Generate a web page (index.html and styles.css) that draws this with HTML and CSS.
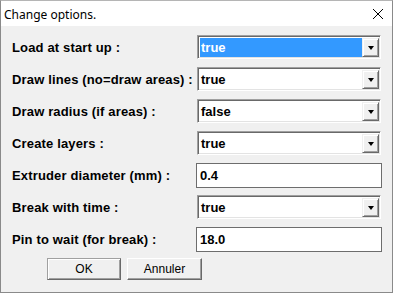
FILE: index.html
```html
<!DOCTYPE html>
<html lang="en">
<head>
    <meta charset="UTF-8">
    <meta name="viewport" content="width=device-width, initial-scale=1.0">
    <title>Change options.</title>
    <link rel="stylesheet" href="styles.css">
</head>
<body>
    <div class="window">
        <div class="titlebar">
            <span class="title">Change options.</span>
            <svg class="close" width="12" height="12" viewBox="0 0 12 12">
                <path d="M1 1 L11 11 M11 1 L1 11" stroke="#000" stroke-width="1"/>
            </svg>
        </div>
        <div class="content">
            <div class="row">
                <span class="label">Load at start up :</span>
                <div class="combo">
                    <span class="value selected">true</span>
                    <span class="drop"><span class="arrow"></span></span>
                </div>
            </div>
            <div class="row">
                <span class="label">Draw lines (no=draw areas) :</span>
                <div class="combo">
                    <span class="value">true</span>
                    <span class="drop"><span class="arrow"></span></span>
                </div>
            </div>
            <div class="row">
                <span class="label">Draw radius (if areas) :</span>
                <div class="combo">
                    <span class="value">false</span>
                    <span class="drop"><span class="arrow"></span></span>
                </div>
            </div>
            <div class="row">
                <span class="label">Create layers :</span>
                <div class="combo">
                    <span class="value">true</span>
                    <span class="drop"><span class="arrow"></span></span>
                </div>
            </div>
            <div class="row">
                <span class="label">Extruder diameter (mm) :</span>
                <div class="textbox">0.4</div>
            </div>
            <div class="row">
                <span class="label">Break with time :</span>
                <div class="combo">
                    <span class="value">true</span>
                    <span class="drop"><span class="arrow"></span></span>
                </div>
            </div>
            <div class="row">
                <span class="label">Pin to wait (for break) :</span>
                <div class="textbox">18.0</div>
            </div>
            <div class="buttons">
                <button class="btn ok">OK</button>
                <button class="btn cancel">Annuler</button>
            </div>
        </div>
    </div>
</body>
</html>
```

FILE: styles.css
```css
html, body {
    margin: 0;
    padding: 0;
    background: #f0f0f0;
}
.window {
    width: 393px;
    height: 293px;
    box-sizing: border-box;
    border: 1px solid #8a8a8a;
    border-top-color: #b5b5b5;
    background: #f0f0f0;
    font-family: "Liberation Sans", Arial, sans-serif;
}
.titlebar {
    height: 25px;
    background: #fff;
    display: flex;
    align-items: center;
    justify-content: space-between;
    padding: 0 8px 0 3px;
}
.title {
    font-family: "Noto Sans", sans-serif;
    font-size: 12px;
    color: #000;
    margin-top: 1px;
}
.close {
    display: block;
    margin-top: 1px;
}
.content {
    padding: 5px 0 0 11px;
}
.row {
    height: 32px;
    display: flex;
    align-items: center;
}
.label {
    width: 185px;
    font-size: 13px;
    font-weight: bold;
    letter-spacing: 0.15px;
    white-space: nowrap;
    color: #000;
}
.combo {
    width: 184px;
    height: 24px;
    box-sizing: border-box;
    border: 1px solid;
    border-color: #a0a0a0 #fff #fff #a0a0a0;
    box-shadow: inset 1px 1px #696969, inset -1px -1px #e3e3e3;
    background: #fff;
    display: flex;
    padding: 2px 1px 1px 1px;
}
.value {
    flex: 1;
    font-size: 13px;
    font-weight: bold;
    color: #000;
    padding-left: 1px;
    line-height: 19px;
    margin-left: 1px;
}
.value.selected {
    background: #3399ff;
    color: #fff;
}
.drop {
    width: 17px;
    height: 19px;
    box-sizing: border-box;
    background: #f0f0f0;
    border: 1px solid;
    border-color: #f0f0f0 #696969 #696969 #f0f0f0;
    box-shadow: inset 1px 1px #fff, inset -1px -1px #a0a0a0;
    display: flex;
    align-items: center;
    justify-content: center;
}
.arrow {
    width: 0;
    height: 0;
    border-left: 3.5px solid transparent;
    border-right: 3.5px solid transparent;
    border-top: 4px solid #000;
}
.textbox {
    width: 186px;
    height: 25px;
    box-sizing: border-box;
    margin-left: -1px;
    border: 1px solid #6d6d6d;
    background: #fff;
    font-size: 13px;
    font-weight: bold;
    line-height: 23px;
    padding-left: 3px;
    color: #000;
}
.buttons {
    display: flex;
    gap: 6px;
    margin: 3px 0 0 35px;
}
.btn {
    height: 22px;
    box-sizing: border-box;
    font-family: "Liberation Sans", Arial, sans-serif;
    font-size: 12px;
    color: #000;
    background: #f0f0f0;
    border: 1px solid;
    border-color: #fff #696969 #696969 #fff;
    box-shadow: inset -1px -1px #a0a0a0;
    padding: 0;
}
.btn.ok {
    width: 74px;
    border-color: #a0a0a0 #696969 #696969 #a0a0a0;
    box-shadow: inset 1px 1px #fff, inset -1px -1px #a0a0a0;
}
.btn.cancel {
    width: 75px;
}
```
